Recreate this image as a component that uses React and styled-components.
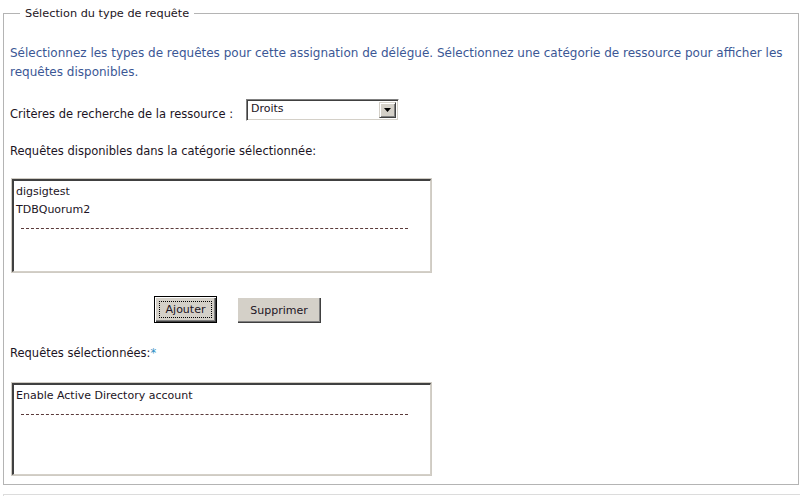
import React from "react";
import styled, { createGlobalStyle } from "styled-components";

const GlobalStyle = createGlobalStyle`
    html, body {
        margin: 0;
        padding: 0;
        background: #ffffff;
    }
    body {
        width: 800px;
        height: 496px;
        overflow: hidden;
        font-family: "DejaVu Sans", Verdana, sans-serif;
        font-size: 11px;
        color: #1c1424;
    }
`;

const StyledFieldset = styled.fieldset`
    box-sizing: border-box;
    margin: 5px 2px 0 3px;
    padding: 0 6px 0 6px;
    height: 480px;
    border: 1px solid #b4b4b4;
    display: flex;
    flex-direction: column;
    align-items: flex-start;
`;

const StyledLegend = styled.legend`
    margin-left: 10px;
    padding: 2px 5px 0 5px;
    font-size: 11.3px;
    line-height: 14px;
    color: #1c1424;
`;

const StyledNextFieldset = styled.div`
    margin: 9px 0 0 3px;
    border-top: 1px solid #dcdcdc;
    border-left: 1px solid #dcdcdc;
    height: 10px;
`;

const StyledIntro = styled.p`
    margin: 23px 0 0 0;
    font-size: 12px;
    line-height: 19px;
    color: #3b5795;
    width: 782px;
`;

const StyledRow = styled.div`
    display: flex;
    align-items: flex-start;
    margin-top: ${(props) => props.$top || 0}px;
`;

const StyledLabel = styled.div`
    font-size: 11.5px;
    line-height: 16px;
    margin-top: ${(props) => props.$top || 0}px;
    margin-right: ${(props) => props.$right || 0}px;
    white-space: nowrap;
`;

const StyledRequired = styled.span`
    color: #2f8fc4;
`;

const StyledSelect = styled.div`
    box-sizing: border-box;
    width: 153px;
    height: 22px;
    display: flex;
    align-items: stretch;
    border-top: 1px solid #808080;
    border-left: 1px solid #808080;
    border-right: 1px solid #ffffff;
    border-bottom: 1px solid #ffffff;
    box-shadow: inset 1px 1px 0 #404040, inset -1px -1px 0 #d4d0c8;
    background: #ffffff;
`;

const StyledSelectValue = styled.div`
    flex: 1;
    padding: 1px 0 0 4px;
    font-size: 11px;
    line-height: 16px;
    color: #1c1424;
`;

const StyledSelectButton = styled.div`
    box-sizing: border-box;
    width: 17px;
    margin: 2px 2px 2px 0;
    background: #d4d0c8;
    border-top: 1px solid #d4d0c8;
    border-left: 1px solid #d4d0c8;
    border-right: 1px solid #404040;
    border-bottom: 1px solid #404040;
    box-shadow: inset 1px 1px 0 #ffffff, inset -1px -1px 0 #808080;
    display: flex;
    align-items: center;
    justify-content: center;
`;

const StyledListFrame = styled.div`
    box-sizing: border-box;
    width: 421px;
    height: ${(props) => props.$height}px;
    margin-top: ${(props) => props.$top || 0}px;
    margin-left: 1px;
    border: 1px solid #cfcbc3;
    background: #ffffff;
`;

const StyledList = styled.div`
    box-sizing: border-box;
    height: 100%;
    border-top: 2px solid #404040;
    border-left: 2px solid #404040;
    border-right: 1px solid #d4d0c8;
    border-bottom: 1px solid #d4d0c8;
    padding: 2px 0 0 2px;
`;

const StyledOption = styled.div`
    font-size: 11px;
    line-height: 18px;
    color: #1c1424;
    white-space: nowrap;
`;

const StyledSeparator = styled.div`
    margin: 9px 0 0 5px;
    width: 387px;
    border-top: 1px dashed #5a3a3a;
`;

const StyledButtons = styled.div`
    display: flex;
    align-items: flex-start;
    gap: 20px;
    margin: 23px 0 0 144px;
`;

const StyledButton = styled.button`
    box-sizing: border-box;
    height: ${(props) => (props.$default ? 27 : 26)}px;
    width: ${(props) => props.$width}px;
    padding: 0;
    margin-top: ${(props) => (props.$default ? 0 : 1)}px;
    background: #d4d0c8;
    font-family: "DejaVu Sans", Verdana, sans-serif;
    font-size: 11px;
    color: #1c1424;
    border: ${(props) => (props.$default ? "1px solid #000000" : "none")};
    box-shadow: inset 1px 1px 0 #ffffff, inset -1px -1px 0 #404040,
        inset -2px -2px 0 #808080;
    display: flex;
    align-items: center;
    justify-content: center;
`;

const StyledFocus = styled.span`
    box-sizing: border-box;
    width: calc(100% - 8px);
    height: calc(100% - 8px);
    border: 1px dotted #000000;
    display: flex;
    align-items: center;
    justify-content: center;
`;

const App = () => {
    return (
        <>
            <GlobalStyle />
            <StyledFieldset>
                <StyledLegend>Sélection du type de requête</StyledLegend>
                <StyledIntro>
                    Sélectionnez les types de requêtes pour cette assignation de
                    délégué. Sélectionnez une catégorie de ressource pour afficher
                    les requêtes disponibles.
                </StyledIntro>
                <StyledRow $top={17}>
                    <StyledLabel $top={7} $right={13}>
                        Critères de recherche de la ressource :
                    </StyledLabel>
                    <StyledSelect>
                        <StyledSelectValue>Droits</StyledSelectValue>
                        <StyledSelectButton>
                            <svg width="7" height="4" viewBox="0 0 7 4">
                                <path d="M0 0h7L3.5 4z" fill="#000" />
                            </svg>
                        </StyledSelectButton>
                    </StyledSelect>
                </StyledRow>
                <StyledLabel $top={21}>
                    Requêtes disponibles dans la catégorie sélectionnée:
                </StyledLabel>
                <StyledListFrame $top={19} $height={95}>
                    <StyledList>
                        <StyledOption>digsigtest</StyledOption>
                        <StyledOption>TDBQuorum2</StyledOption>
                        <StyledSeparator />
                    </StyledList>
                </StyledListFrame>
                <StyledButtons>
                    <StyledButton $default $width={63}>
                        <StyledFocus>Ajouter</StyledFocus>
                    </StyledButton>
                    <StyledButton $width={84}>Supprimer</StyledButton>
                </StyledButtons>
                <StyledLabel $top={22}>
                    Requêtes sélectionnées:<StyledRequired>*</StyledRequired>
                </StyledLabel>
                <StyledListFrame $top={21} $height={94}>
                    <StyledList>
                        <StyledOption>Enable Active Directory account</StyledOption>
                        <StyledSeparator />
                    </StyledList>
                </StyledListFrame>
            </StyledFieldset>
            <StyledNextFieldset />
        </>
    );
};

export default App;
